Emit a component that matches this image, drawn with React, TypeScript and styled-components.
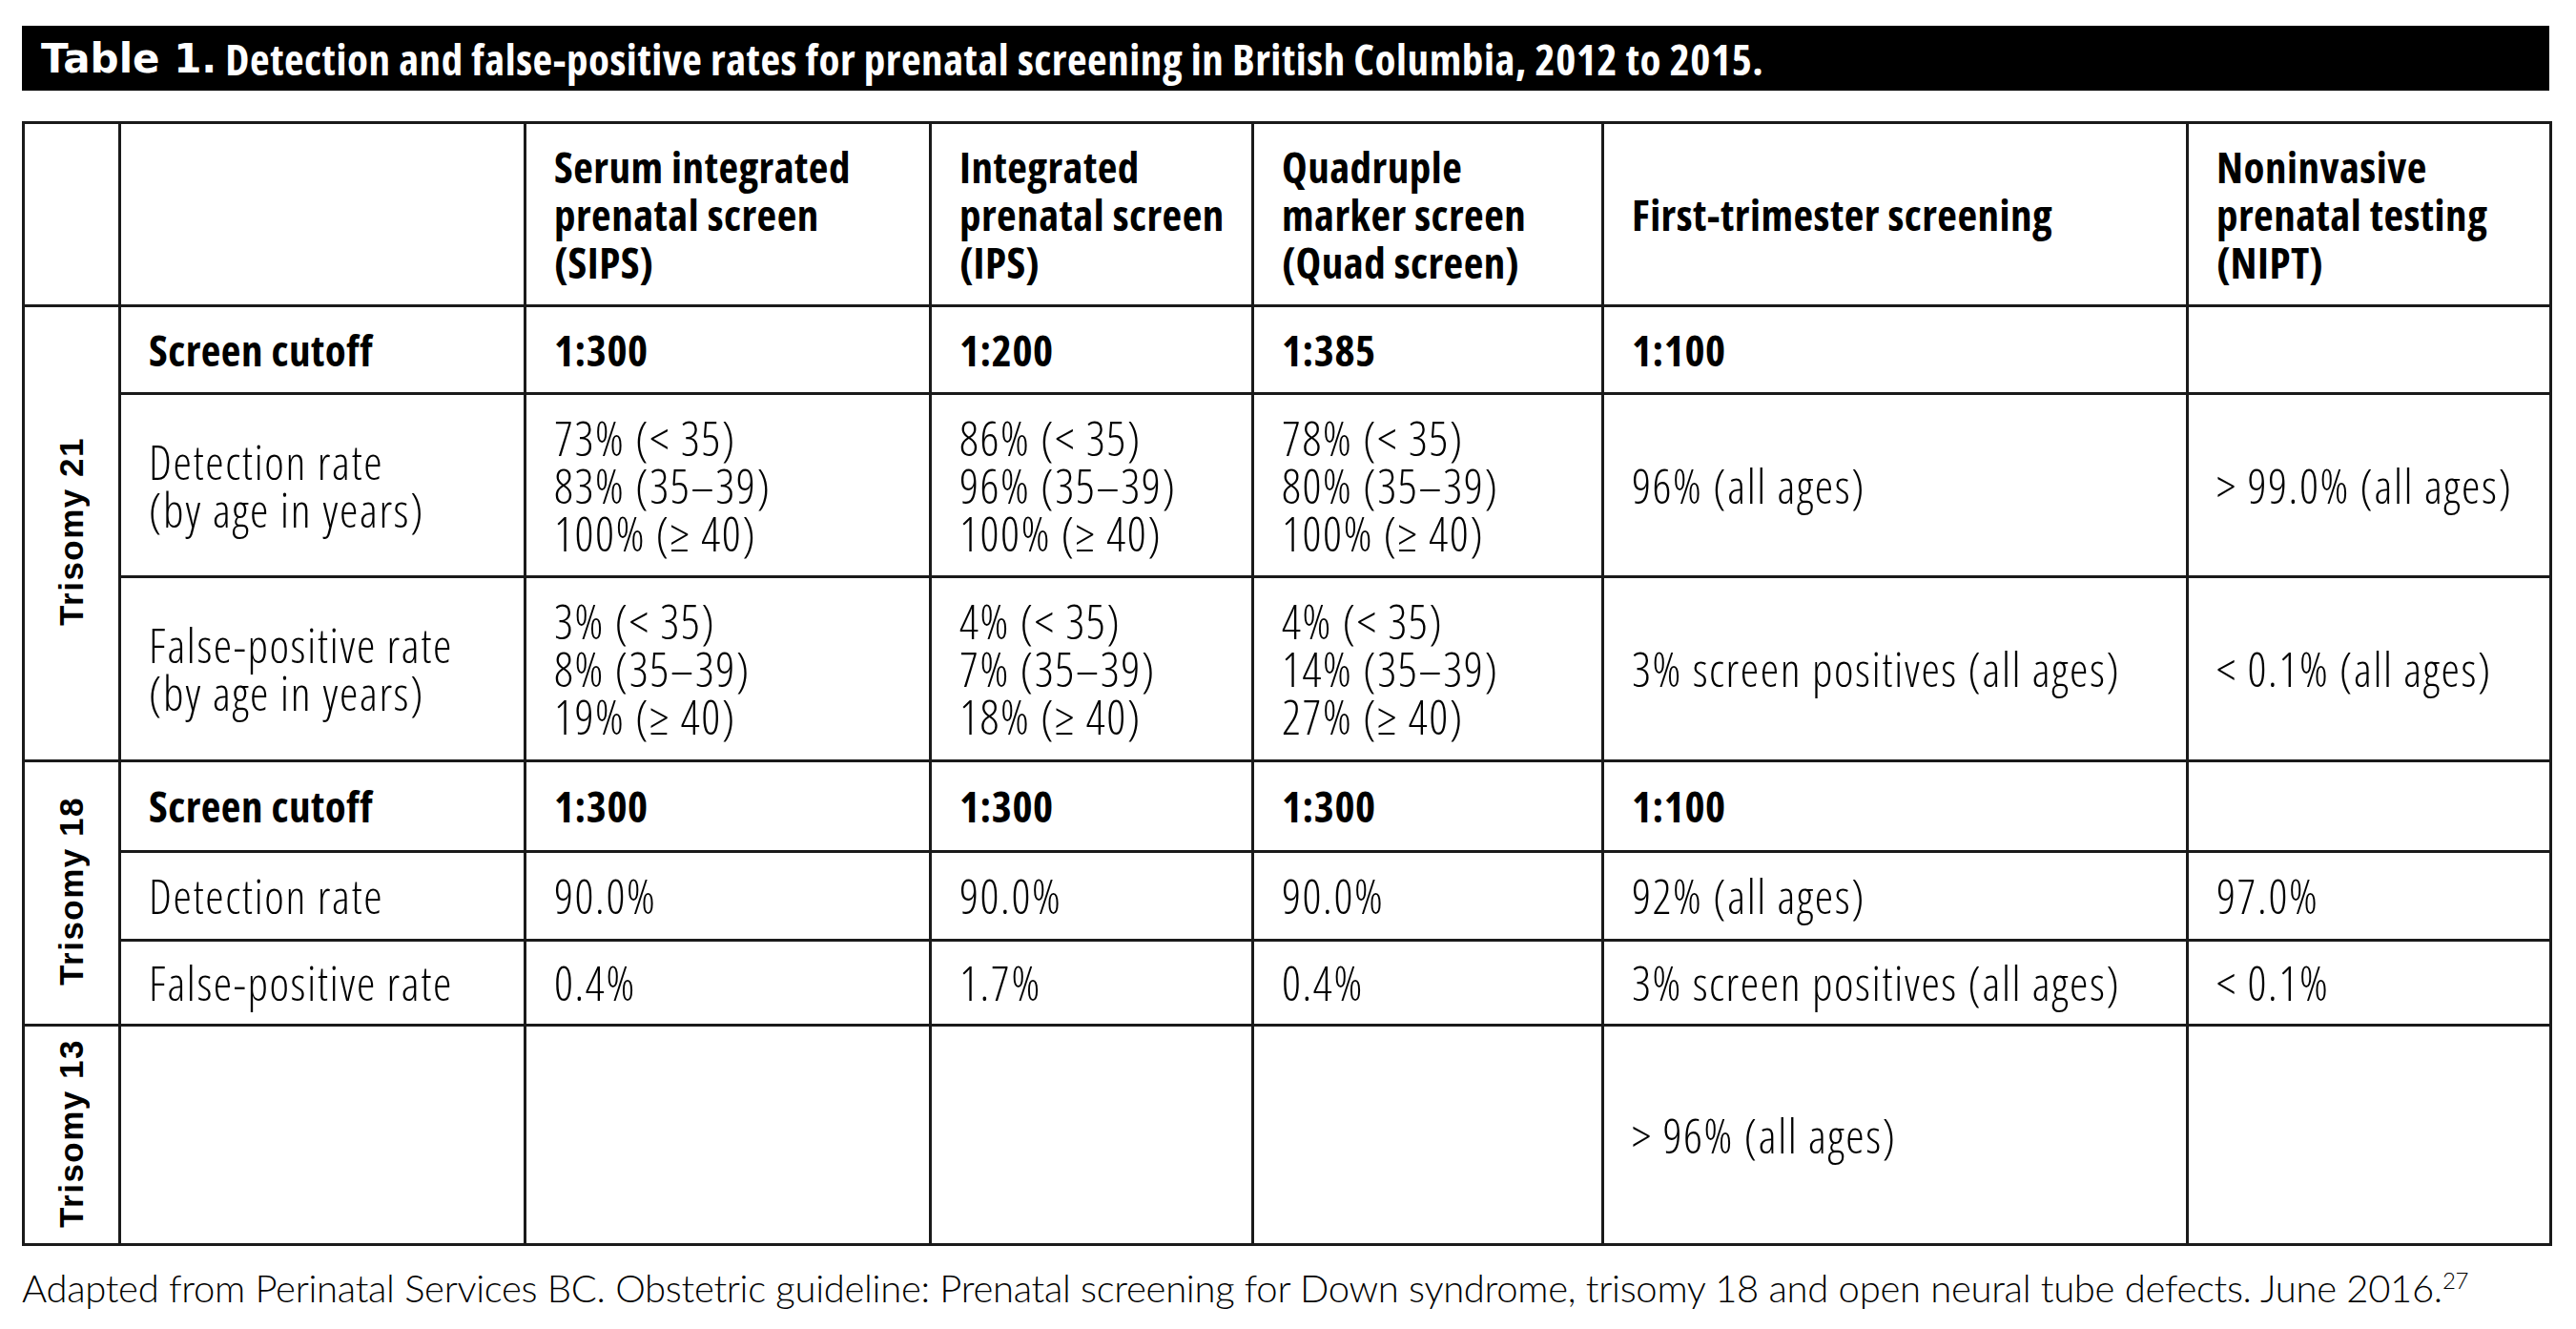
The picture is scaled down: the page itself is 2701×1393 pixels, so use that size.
import React from "react";
import styled, { createGlobalStyle } from "styled-components";

const GlobalStyle = createGlobalStyle`
  html, body { margin: 0; padding: 0; background: #ffffff; }
  body { color: #000; }
`;

const COND = `"Open Sans", "Liberation Sans Narrow", "Liberation Sans", sans-serif`;
const WIDE = `"Liberation Sans", Arial, sans-serif`;

const Page = styled.div`
  width: 2650px;
  padding: 27px 0 0 23px;
`;

const TitleBar = styled.div`
  height: 68px;
  background: #000;
  color: #fff;
  display: flex;
  align-items: center;
  padding-left: 20px;
  white-space: nowrap;
`;

const TitleLabel = styled.span`
  font-family: "DejaVu Sans", "Liberation Sans", sans-serif;
  font-weight: 700;
  font-size: 42px;
  margin-right: 9px;
`;

const TitleText = styled.span`
  font-family: ${COND};
  font-stretch: 75%;
  font-weight: 700;
  font-size: 45px;
  letter-spacing: 0.55px;
`;

const Table = styled.table`
  margin-top: 32px;
  width: 2650px;
  table-layout: fixed;
  border-collapse: collapse;
  border: 3px solid #000;
`;

const Row = styled.tr<{ $h: number }>`
  height: ${(p) => p.$h}px;
`;

const BaseCell = styled.td`
  border: 3px solid #1a1a1a;
  padding: 0 12px 0 29px;
  vertical-align: middle;
  text-align: left;
  font-family: ${COND};
  font-stretch: 75%;
  line-height: 50px;
  white-space: nowrap;
`;

const HeadCell = styled(BaseCell).attrs({ as: "th" })`
  font-weight: 700;
  font-size: 45px;
  letter-spacing: 0.5px;
`;

const Cell = styled(BaseCell)<{ $bold?: boolean }>`
  font-weight: ${(p) => (p.$bold ? 700 : 300)};
  font-size: ${(p) => (p.$bold ? 45 : 49)}px;
  letter-spacing: ${(p) => (p.$bold ? 0.5 : 1.6)}px;
`;

const GroupCell = styled.td`
  border: 3px solid #1a1a1a;
  padding: 0;
  text-align: center;
  vertical-align: middle;
`;

const GroupLabel = styled.span`
  display: inline-block;
  writing-mode: vertical-rl;
  transform: rotate(180deg);
  font-family: ${WIDE};
  font-weight: 700;
  font-size: 35px;
  letter-spacing: 1.5px;
  white-space: nowrap;
`;

const Footer = styled.p`
  margin: 20px 0 0 0;
  font-family: Lato, "Liberation Sans", sans-serif;
  font-weight: 300;
  font-size: 40px;
  line-height: 48px;
  letter-spacing: -0.3px;
  white-space: nowrap;
`;

const Sup = styled.sup`
  font-size: 24px;
  vertical-align: 14px;
  line-height: 0;
`;

const COLS = [101, 425, 425, 338, 367, 613, 381];

type Group = {
  label: string;
  rows: { h: number; bold?: boolean; cells: string[][] }[];
};

const groups: Group[] = [
  {
    label: "Trisomy 21",
    rows: [
      {
        h: 92,
        bold: true,
        cells: [["Screen cutoff"], ["1:300"], ["1:200"], ["1:385"], ["1:100"], [""]],
      },
      {
        h: 192,
        cells: [
          ["Detection rate", "(by age in years)"],
          ["73% (< 35)", "83% (35–39)", "100% (≥ 40)"],
          ["86% (< 35)", "96% (35–39)", "100% (≥ 40)"],
          ["78% (< 35)", "80% (35–39)", "100% (≥ 40)"],
          ["96% (all ages)"],
          ["> 99.0% (all ages)"],
        ],
      },
      {
        h: 193,
        cells: [
          ["False-positive rate", "(by age in years)"],
          ["3% (< 35)", "8% (35–39)", "19% (≥ 40)"],
          ["4% (< 35)", "7% (35–39)", "18% (≥ 40)"],
          ["4% (< 35)", "14% (35–39)", "27% (≥ 40)"],
          ["3% screen positives (all ages)"],
          ["< 0.1% (all ages)"],
        ],
      },
    ],
  },
  {
    label: "Trisomy 18",
    rows: [
      {
        h: 95,
        bold: true,
        cells: [["Screen cutoff"], ["1:300"], ["1:300"], ["1:300"], ["1:100"], [""]],
      },
      {
        h: 93,
        cells: [["Detection rate"], ["90.0%"], ["90.0%"], ["90.0%"], ["92% (all ages)"], ["97.0%"]],
      },
      {
        h: 89,
        cells: [
          ["False-positive rate"],
          ["0.4%"],
          ["1.7%"],
          ["0.4%"],
          ["3% screen positives (all ages)"],
          ["< 0.1%"],
        ],
      },
    ],
  },
  {
    label: "Trisomy 13",
    rows: [
      {
        h: 230,
        cells: [[""], [""], [""], [""], ["> 96% (all ages)"], [""]],
      },
    ],
  },
];

const headers: string[][] = [
  [],
  [],
  ["Serum integrated", "prenatal screen", "(SIPS)"],
  ["Integrated", "prenatal screen", "(IPS)"],
  ["Quadruple", "marker screen", "(Quad screen)"],
  ["First-trimester screening"],
  ["Noninvasive", "prenatal testing", "(NIPT)"],
];

const Lines: React.FC<{ lines: string[] }> = ({ lines }) => (
  <>
    {lines.map((l, i) => (
      <React.Fragment key={i}>
        {i > 0 && <br />}
        {l}
      </React.Fragment>
    ))}
  </>
);

export default function App() {
  return (
    <>
      <GlobalStyle />
      <Page>
        <TitleBar>
          <TitleLabel>Table 1.</TitleLabel>
          <TitleText>
            Detection and false-positive rates for prenatal screening in British Columbia, 2012 to 2015.
          </TitleText>
        </TitleBar>
        <Table>
          <colgroup>
            {COLS.map((w, i) => (
              <col key={i} style={{ width: w }} />
            ))}
          </colgroup>
          <thead>
            <Row $h={192}>
              {headers.map((h, i) => (
                <HeadCell key={i}>
                  <Lines lines={h} />
                </HeadCell>
              ))}
            </Row>
          </thead>
          <tbody>
            {groups.map((g) =>
              g.rows.map((r, ri) => (
                <Row key={g.label + ri} $h={r.h}>
                  {ri === 0 && (
                    <GroupCell rowSpan={g.rows.length}>
                      <GroupLabel>{g.label}</GroupLabel>
                    </GroupCell>
                  )}
                  {r.cells.map((c, ci) => (
                    <Cell key={ci} $bold={r.bold}>
                      <Lines lines={c} />
                    </Cell>
                  ))}
                </Row>
              ))
            )}
          </tbody>
        </Table>
        <Footer>
          Adapted from Perinatal Services BC. Obstetric guideline: Prenatal screening for Down syndrome, trisomy 18 and open
          neural tube defects. June 2016.<Sup>27</Sup>
        </Footer>
      </Page>
    </>
  );
}
